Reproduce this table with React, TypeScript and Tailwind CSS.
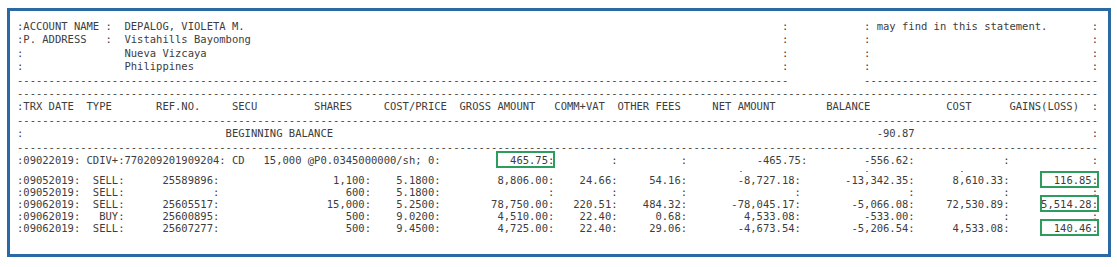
import React from 'react'

const W = 171
const CH = 6.3215 // advance of one DejaVu Sans Mono cell at 10.5px

type Part = [number, string]

// lay text out on a fixed-width character grid, like the printed statement
function row(parts: Part[]) {
    const chars: string[] = Array(W).fill(' ')
    for (const [at, text] of parts) {
        for (let i = 0; i < text.length; i++) chars[at + i] = text[i]
    }
    return chars.join('')
}

// right-aligned: last char lands on `end`
const r = (end: number, text: string): Part => [end - text.length + 1, text]
const dashes = (from: number, to: number): Part => [from, '-'.repeat(to - from + 1)]

const headerLines = [
    row([[0, ':ACCOUNT NAME :  DEPALOG, VIOLETA M.'], [121, ':'], [134, ': may find in this statement.'], [170, ':']]),
    row([[0, ':P. ADDRESS   :  Vistahills Bayombong'], [121, ':'], [134, ':'], [170, ':']]),
    row([[0, ':'], [17, 'Nueva Vizcaya'], [121, ':'], [134, ':'], [170, ':']]),
    row([[0, ':'], [17, 'Philippines'], [121, ':'], [134, ':'], [170, ':']]),
    row([dashes(0, 121), dashes(134, 170)]),
    row([dashes(0, 170)]),
    row([
        [0, ':TRX DATE'], [11, 'TYPE'], [22, 'REF.NO.'], [34, 'SECU'], [47, 'SHARES'],
        [58, 'COST/PRICE'], [70, 'GROSS AMOUNT'], [85, 'COMM+VAT'], [95, 'OTHER FEES'],
        [110, 'NET AMOUNT'], [128, 'BALANCE'], [147, 'COST'], [157, 'GAINS(LOSS)'], [170, ':'],
    ]),
    row([dashes(0, 170)]),
    row([[0, ':'], [33, 'BEGINNING BALANCE'], [136, '-90.87'], [170, ':']]),
    row([dashes(0, 170)]),
]

const dividendLine = row([
    [0, ':09022019: CDIV+:770209201909204: CD'],
    [39, '15,000 @P0.0345000000/sh; 0:'],
    r(84, '465.75:'), [94, ':'], [105, ':'], r(124, '-465.75:'), r(141, '-556.62:'), [156, ':'], [170, ':'],
])

// faint specks left between the dividend line and the trades
const specks = [114, 134, 149]

type Trx = {
    date: string
    type: string
    ref: string
    shares: string
    price: string
    gross: string
    comm: string
    fees: string
    net: string
    balance: string
    cost: string
    gains: string
}

const trades: Trx[] = [
    { date: '09052019', type: 'SELL', ref: '25589896', shares: '1,100', price: '5.1800', gross: '8,806.00', comm: '24.66', fees: '54.16', net: '-8,727.18', balance: '-13,342.35', cost: '8,610.33', gains: '116.85' },
    { date: '09052019', type: 'SELL', ref: '', shares: '600', price: '5.1800', gross: '', comm: '', fees: '', net: '', balance: '', cost: '', gains: '' },
    { date: '09062019', type: 'SELL', ref: '25605517', shares: '15,000', price: '5.2500', gross: '78,750.00', comm: '220.51', fees: '484.32', net: '-78,045.17', balance: '-5,066.08', cost: '72,530.89', gains: '5,514.28' },
    { date: '09062019', type: 'BUY', ref: '25600895', shares: '500', price: '9.0200', gross: '4,510.00', comm: '22.40', fees: '0.68', net: '4,533.08', balance: '-533.00', cost: '', gains: '' },
    { date: '09062019', type: 'SELL', ref: '25607277', shares: '500', price: '9.4500', gross: '4,725.00', comm: '22.40', fees: '29.06', net: '-4,673.54', balance: '-5,206.54', cost: '4,533.08', gains: '140.46' },
]

const tradeLine = (t: Trx) =>
    row([
        [0, `:${t.date}:`],
        r(16, `${t.type}:`),
        r(31, `${t.ref}:`),
        r(55, `${t.shares}:`),
        r(66, `${t.price}:`),
        r(84, `${t.gross}:`),
        r(94, `${t.comm}:`),
        r(105, `${t.fees}:`),
        r(123, `${t.net}:`),
        r(141, `${t.balance}:`),
        r(156, `${t.cost}:`),
        r(170, `${t.gains}:`),
    ])

function Line({ text, box, className }: { text: string; box?: [number, number]; className: string }) {
    if (!box) return <div className={className}>{text}</div>
    return (
        <div className={className}>
            {text.slice(0, box[0])}
            <span className="outline-2 outline-[#2e9c5c] -outline-offset-1 pt-[2px] pb-px">{text.slice(box[0], box[1] + 1)}</span>
            {text.slice(box[1] + 1)}
        </div>
    )
}

export default function App() {
    return (
        <div className="w-[1117px] h-[267px] bg-white overflow-hidden pt-[8px] pl-[7px]">
            <div className="w-[1104px] h-[249px] border-[3px] border-[#2a69a4] pl-[7px] pt-[9px] font-['DejaVu_Sans_Mono',monospace] text-[10.5px] text-[#3d3d3d] whitespace-pre">
                {headerLines.map((l, i) => (
                    <Line key={i} text={l} className="h-[13.4px] leading-[13.4px]" />
                ))}
                <Line text={dividendLine} box={[76, 84]} className="h-[13.4px] leading-[13.4px]" />
                <div className="flex h-[8px] items-center">
                    {specks.map((at, i) => (
                        <span
                            key={at}
                            className="w-[2px] h-[1px] bg-[#8a8a8a]"
                            style={{ marginLeft: i === 0 ? at * CH + 2 : (at - specks[i - 1]) * CH - 2 }}
                        />
                    ))}
                </div>
                {trades.map((t, i) => (
                    <Line
                        key={i}
                        text={tradeLine(t)}
                        box={t.gains ? [162, 170] : undefined}
                        className="h-[11.85px] leading-[11.85px]"
                    />
                ))}
            </div>
        </div>
    )
}
